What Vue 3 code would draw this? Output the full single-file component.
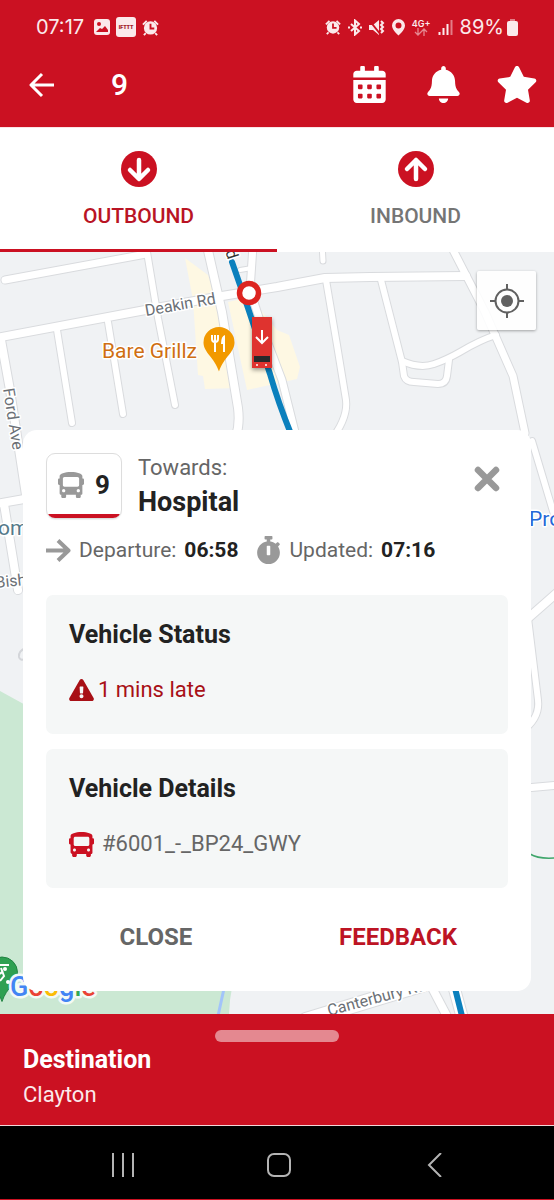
<script setup>
import { ref } from 'vue'

const direction = ref('outbound')

const tabs = [
  { id: 'outbound', label: 'OUTBOUND', arrow: 'M18 9v18M9 19l9 9 9-9' },
  { id: 'inbound', label: 'INBOUND', arrow: 'M18 28V9M9 18l9-9 9 9' },
]

const busPath =
  'M488 128h-8V80c0-44.8-99.2-80-224-80S32 35.2 32 80v48h-8c-13.25 0-24 10.74-24 24v80c0 13.25 10.75 24 24 24h8v160c0 17.67 14.33 32 32 32v32c0 17.67 14.33 32 32 32h32c17.67 0 32-14.33 32-32v-32h192v32c0 17.67 14.33 32 32 32h32c17.67 0 32-14.33 32-32v-32h6.4c16 0 25.6-12.8 25.6-25.6V256h8c13.25 0 24-10.75 24-24v-80c0-13.26-10.75-24-24-24zM112 400c-17.67 0-32-14.33-32-32s14.33-32 32-32 32 14.33 32 32-14.33 32-32 32zm16-112c-17.67 0-32-14.33-32-32V128c0-17.67 14.33-32 32-32h256c17.67 0 32 14.33 32 32v128c0 17.67-14.33 32-32 32H128zm272 112c-17.67 0-32-14.33-32-32s14.33-32 32-32 32 14.33 32 32-14.33 32-32 32z'

const alarmPath = 'M1 6l4-4M17 6l-4-4M4 15l-2 2M14 15l2 2'

const roads = [
  { d: 'M5 280L146 254', w: 7 },
  { d: 'M146 246L158 318L175 405', w: 6 },
  { d: 'M-4 338L140 311L222 296L277 287L325 278L370 277L466 276', w: 8 },
  { d: 'M57 330L72 423', w: 6 },
  { d: 'M108 322L123 414', w: 6 },
  { d: 'M1 340L10 390L26 495', w: 8 },
  { d: 'M207 246L222 312L238 408Q240 424 236 436', w: 8 },
  { d: 'M253 246L250 290L263 330L282 380L296 436', w: 7 },
  { d: 'M240 270L252 268', w: 4 },
  { d: 'M322 244L323 261', w: 5 },
  { d: 'M326 280L337 345L346 400Q348 416 334 436', w: 6 },
  { d: 'M381 280L402 362L404 376Q406 382 414 382L438 384Q446 384 447 376L449 360', w: 6 },
  { d: 'M402 361Q420 369 434 364Q446 360 460 352Q480 340 496 335', w: 6 },
  { d: 'M451 246L485 312L495 335L513 376L525 433', w: 7 },
  { d: 'M532 441L558 528', w: 6 },
  { d: 'M526 620L560 590', w: 8 },
  { d: 'M528 618L538 700Q540 716 526 728', w: 6 },
  { d: 'M526 788L560 785', w: 7 },
  { d: 'M-4 504L30 498', w: 8 },
  { d: 'M4 504L18 590', w: 8 },
  { d: 'M306 1020L424 984', w: 14 },
  { d: 'M428 980L450 1022', w: 8 },
  { d: 'M452 980L463 1020', w: 11 },
]
</script>

<template>
  <div class="screen">
    <header class="top">
      <div class="status">
        <div class="status-left">
          <span class="clock">07:17</span>
          <svg width="16" height="16" viewBox="0 0 16 16">
            <rect width="16" height="16" rx="3" fill="currentColor" />
            <circle cx="5" cy="5" r="2" class="cut" />
            <path d="M2 13l4-4 2 1 3-3 3 4v2z" class="cut" />
          </svg>
          <span class="ifttt">IFTTT</span>
          <svg width="17" height="17" viewBox="0 0 18 18">
            <circle cx="9" cy="9.500" r="7" fill="currentColor" />
            <path :d="alarmPath" class="line-2" />
            <path d="M9 5v5h4" class="cut-line" />
          </svg>
        </div>
        <div class="status-right">
          <svg width="16" height="16" viewBox="0 0 18 18">
            <circle cx="9" cy="9.500" r="7" fill="currentColor" />
            <path :d="alarmPath" class="line-2" />
            <path d="M9 5v5h4" class="cut-line" />
          </svg>
          <svg width="14" height="17" viewBox="0 0 14 17">
            <path d="M3 5l8 7-4 3.500V1.500L11 5l-8 7M0 8.500h2M12 8.500h2" class="line-2" />
          </svg>
          <svg width="16" height="17" viewBox="0 0 16 17">
            <path d="M0 6h4l6-5v15l-6-5H0z" fill="currentColor" />
            <path d="M0 1l12 15" class="cut-line" />
            <path d="M12 2l2 2-2 2 2 2-2 2 2 2-2 2" class="line-2" />
          </svg>
          <svg width="13" height="17" viewBox="0 0 13 17">
            <path fill-rule="evenodd" fill="currentColor" d="M6.500 0A6.500 6.500 0 0 0 0 6.500C0 11 6.500 16.500 6.500 16.500S13 11 13 6.500A6.500 6.500 0 0 0 6.500 0zm0 3.500a3 3 0 1 1 0 6 3 3 0 0 1 0-6z" />
          </svg>
          <span class="network">
            <span>4G+</span>
            <svg width="14" height="8" viewBox="0 0 14 8">
              <path d="M4 0v7M1 4l3 3 3-3M10 8V1M7 4l3-3 3 3" fill="none" stroke="currentColor" stroke-width="1.300" opacity=".55" />
            </svg>
          </span>
          <svg width="15" height="16" viewBox="0 0 15 16">
            <path d="M1.500 13v3M5.500 9v7M9.500 5v11" fill="none" stroke="currentColor" stroke-width="2" />
            <path d="M13.500 1v15" fill="none" stroke="currentColor" stroke-width="2" opacity=".5" />
          </svg>
          <span class="battery">
            <span>89%</span>
            <svg width="11" height="17" viewBox="0 0 11 17">
              <path d="M3 0h5v2H3z" fill="currentColor" opacity=".5" />
              <rect y="2" width="11" height="15" rx="2" fill="currentColor" />
            </svg>
          </span>
        </div>
      </div>
      <div class="app-bar">
        <button class="back" aria-label="Back">
          <svg width="26" height="26" viewBox="0 0 26 26">
            <path d="M13 2L2 13l11 11M2 13h23" fill="none" stroke="currentColor" stroke-width="3" stroke-linejoin="round" />
          </svg>
        </button>
        <h1>9</h1>
        <div class="actions">
          <button aria-label="Timetable">
            <svg width="33" height="37" viewBox="0 0 448 512">
              <path fill="currentColor" d="M0 464c0 26.500 21.500 48 48 48h352c26.500 0 48-21.500 48-48V192H0v272zm320-196c0-6.600 5.400-12 12-12h40c6.600 0 12 5.400 12 12v40c0 6.600-5.400 12-12 12h-40c-6.600 0-12-5.400-12-12v-40zm0 128c0-6.600 5.400-12 12-12h40c6.600 0 12 5.400 12 12v40c0 6.600-5.400 12-12 12h-40c-6.600 0-12-5.400-12-12v-40zM192 268c0-6.600 5.400-12 12-12h40c6.600 0 12 5.400 12 12v40c0 6.600-5.400 12-12 12h-40c-6.600 0-12-5.400-12-12v-40zm0 128c0-6.600 5.400-12 12-12h40c6.600 0 12 5.400 12 12v40c0 6.600-5.400 12-12 12h-40c-6.600 0-12-5.400-12-12v-40zM64 268c0-6.600 5.400-12 12-12h40c6.600 0 12 5.400 12 12v40c0 6.600-5.400 12-12 12H76c-6.600 0-12-5.400-12-12v-40zm0 128c0-6.600 5.400-12 12-12h40c6.600 0 12 5.400 12 12v40c0 6.600-5.400 12-12 12H76c-6.600 0-12-5.400-12-12v-40zM400 64h-48V16c0-8.800-7.200-16-16-16h-32c-8.800 0-16 7.200-16 16v48H160V16c0-8.800-7.200-16-16-16h-32c-8.800 0-16 7.200-16 16v48H48C21.500 64 0 85.500 0 112v48h448v-48c0-26.500-21.500-48-48-48z" />
            </svg>
          </button>
          <button aria-label="Alerts">
            <svg width="33" height="37" viewBox="0 0 448 512">
              <path fill="currentColor" d="M224 512c35.320 0 63.970-28.650 63.970-64H160.030c0 35.350 28.650 64 63.970 64zm215.390-149.710c-19.320-20.760-55.470-51.990-55.470-154.290 0-77.700-54.480-139.900-127.940-155.160V32c0-17.670-14.320-32-31.980-32s-31.980 14.330-31.980 32v20.840C118.560 68.100 64.080 130.300 64.080 208c0 102.300-36.150 133.530-55.470 154.290-6 6.450-8.660 14.160-8.610 21.710.11 16.400 12.980 32 32.100 32h383.800c19.120 0 32-15.600 32.100-32 .05-7.550-2.610-15.270-8.610-21.710z" />
            </svg>
          </button>
          <button aria-label="Favourite">
            <svg width="42" height="37" viewBox="0 0 576 512">
              <path fill="currentColor" d="M259.300 17.800L194 150.200 47.900 171.500c-26.200 3.800-36.700 36.100-17.700 54.600l105.700 103-25 145.500c-4.500 26.300 23.200 46 46.400 33.700L288 439.600l130.700 68.700c23.200 12.200 50.900-7.400 46.400-33.700l-25-145.500 105.700-103c19-18.500 8.500-50.800-17.700-54.600L382 150.200 316.700 17.800c-11.700-23.600-45.600-23.900-57.400 0z" />
            </svg>
          </button>
        </div>
      </div>
    </header>

    <nav class="tabs" aria-label="Direction">
      <button
        v-for="tab in tabs"
        :key="tab.id"
        class="tab"
        :class="{ active: direction === tab.id }"
        @click="direction = tab.id"
      >
        <svg width="36" height="36" viewBox="0 0 36 36">
          <circle cx="18" cy="18" r="18" fill="#cb1122" />
          <path :d="tab.arrow" fill="none" stroke="#fff" stroke-width="4.500" stroke-linecap="round" stroke-linejoin="round" />
        </svg>
        <span>{{ tab.label }}</span>
      </button>
    </nav>

    <main class="map">
      <svg class="map-canvas" viewBox="0 252 554 762" preserveAspectRatio="xMidYMin slice" aria-label="Map">
        <rect y="252" width="554" height="762" fill="#f0f2f4" />
        <path d="M185 258L208 275L222 312L237 388L205 389L203 376L198 375L193 300Z" fill="#fef8e3" />
        <path d="M228 302L250 297L277 330L289 335L300 367L297 379L247 390Z" fill="#fef8e3" />
        <path d="M0 691L60 724V960H240Q230 985 229 1014H0Z" fill="#cbe8d3" />
        <path d="M225 984L218 1016" fill="none" stroke="#a2c4fa" stroke-width="3" />
        <path d="M26 648q-8 3-7 9 1 4 6 2" fill="none" stroke="#d4d6da" stroke-width="2" />
        <g fill="none" stroke-linecap="round" stroke-linejoin="round">
          <path v-for="(r, i) in roads" :key="'c' + i" :d="r.d" stroke="#d9dbde" :stroke-width="r.w + 2" />
          <path v-for="(r, i) in roads" :key="'r' + i" :d="r.d" stroke="#fff" :stroke-width="r.w" />
          <path d="M530 854q8 5 24 4" stroke="#3fa66b" stroke-width="1.500" />
          <path d="M232 262L248 308L262 350L270 374Q278 402 291 434" stroke="#0b80bd" stroke-width="6" />
          <path d="M453 980L463 1020" stroke="#0b80bd" stroke-width="6" />
        </g>
        <g class="street">
          <text transform="translate(146 316) rotate(-10)">Deakin Rd</text>
          <text transform="translate(3 389) rotate(81)">Ford Ave</text>
          <text transform="translate(228 260) rotate(72)" text-anchor="end" fill="#333">d</text>
          <text transform="translate(-4 588) rotate(-6)">Bish</text>
          <text transform="translate(329 1016) rotate(-15)">Canterbury Rd</text>
        </g>
        <text class="place" x="102" y="358" fill="#cf6f12">Bare Grillz</text>
        <text class="place" x="-2" y="535" fill="#54798a">om</text>
        <text class="place" x="529" y="526" fill="#2468d8">Pro</text>
        <path d="M219 327a15.500 15.500 0 0 0-15.500 15.500c0 10 11 15 15.500 29 4.500-14 15.500-19 15.500-29A15.500 15.500 0 0 0 219 327z" fill="#f29900" />
        <path d="M212 335v4q0 3 3 3t3-3v-4M215 335v17" fill="none" stroke="#fff" stroke-width="2" />
        <path d="M225 335q-4 1-4 9h2v8h2z" fill="#fff" />
        <circle cx="249" cy="293" r="9.500" fill="#fff" stroke="#dc2420" stroke-width="5.500" />
        <g class="vehicle">
          <rect x="252" y="317" width="20" height="51" fill="#df332f" />
          <path d="M262 330v12M256 337l6 6 6-6" fill="none" stroke="#fff" stroke-width="2" />
          <rect x="254" y="356" width="16" height="6" fill="#29292b" />
          <circle cx="257" cy="365" r="1" fill="#fff" />
          <circle cx="266" cy="365" r="1" fill="#fff" />
        </g>
        <path d="M2 957a15.500 15.500 0 0 0-15.500 15.500c0 10 11 15 15.500 29 4.500-14 15.500-19 15.500-29A15.500 15.500 0 0 0 2 957z" fill="#2fa052" stroke="#218342" />
        <path d="M0 965h9M1 968l3 8-4 5M3 971l-3 3" fill="none" stroke="#fff" stroke-width="2" />
        <circle cx="5" cy="969" r="2" fill="#fff" />
        <circle cx="8" cy="982" r="2" fill="#fff" />
        <text class="google" x="10" y="996"><tspan fill="#4285f4">G</tspan><tspan fill="#ea4335">o</tspan><tspan fill="#fbbc05">o</tspan><tspan fill="#4285f4">g</tspan><tspan fill="#34a853">l</tspan><tspan fill="#ea4335">e</tspan></text>
      </svg>

      <button class="locate" aria-label="Show my location">
        <svg width="34" height="34" viewBox="0 0 34 34">
          <circle cx="17" cy="17" r="11.500" fill="none" stroke="#616161" stroke-width="2" />
          <circle cx="17" cy="17" r="6" fill="#616161" />
          <path d="M17 0v5M17 29v5M0 17h5M29 17h5" stroke="#616161" stroke-width="2" />
        </svg>
      </button>

      <section class="card">
        <div class="card-head">
          <div class="badge">
            <svg width="26" height="26" viewBox="0 0 512 512"><path :d="busPath" fill="#999" /></svg>
            <strong>9</strong>
          </div>
          <div class="towards">
            <span>Towards:</span>
            <h2>Hospital</h2>
          </div>
          <button class="dismiss" aria-label="Dismiss">
            <svg width="28" height="28" viewBox="0 0 28 28">
              <path d="M5 5l18 18M23 5L5 23" fill="none" stroke="currentColor" stroke-width="6.500" stroke-linecap="round" />
            </svg>
          </button>
        </div>

        <div class="times">
          <svg width="25" height="25" viewBox="0 0 25 25">
            <path d="M0 12.500h22M12 2.500l10.500 10L12 22.500" fill="none" stroke="#999" stroke-width="4" stroke-linejoin="round" />
          </svg>
          <span>Departure:</span>
          <strong>06:58</strong>
          <svg class="watch" width="25" height="28" viewBox="0 0 448 512">
            <path fill="#999" d="M432 304c0 114.900-93.100 208-208 208S16 418.900 16 304c0-104 76.300-190.200 176-205.500V64h-28c-6.600 0-12-5.400-12-12V12c0-6.600 5.400-12 12-12h120c6.600 0 12 5.400 12 12v40c0 6.600-5.400 12-12 12h-28v34.500c37.500 5.800 71.700 21.600 99.700 44.600l27.500-27.500c4.700-4.700 12.300-4.700 17 0l28.300 28.300c4.700 4.700 4.700 12.300 0 17l-29.400 29.400-.6.6C419.700 223.300 432 262.200 432 304zm-176 36V188.500c0-6.600-5.400-12-12-12h-40c-6.600 0-12 5.400-12 12V340c0 6.600 5.400 12 12 12h40c6.600 0 12-5.400 12-12z" />
          </svg>
          <span>Updated:</span>
          <strong>07:16</strong>
        </div>

        <div class="panel">
          <h3>Vehicle Status</h3>
          <p class="late">
            <svg width="25" height="22" viewBox="0 0 576 512">
              <path fill="currentColor" d="M569.517 440.013C587.975 472.007 564.806 512 527.940 512H48.054c-36.937 0-59.999-40.055-41.577-71.987L246.423 23.985c18.467-32.009 64.720-31.951 83.154 0l239.940 416.028zM288 354c-25.405 0-46 20.595-46 46s20.595 46 46 46 46-20.595 46-46-20.595-46-46-46zm-43.673-165.346l7.418 136c.347 6.364 5.609 11.346 11.982 11.346h48.546c6.373 0 11.635-4.982 11.982-11.346l7.418-136c.375-6.874-5.098-12.654-11.982-12.654h-63.383c-6.884 0-12.356 5.780-11.981 12.654z" />
            </svg>
            <span>1 mins late</span>
          </p>
        </div>

        <div class="panel">
          <h3>Vehicle Details</h3>
          <p class="fleet">
            <svg width="25" height="25" viewBox="0 0 512 512"><path :d="busPath" fill="#cb1122" /></svg>
            <span>#6001_-_BP24_GWY</span>
          </p>
        </div>

        <div class="card-actions">
          <button class="text-btn">CLOSE</button>
          <button class="text-btn primary">FEEDBACK</button>
        </div>
      </section>
    </main>

    <section class="sheet">
      <div class="handle"></div>
      <h3>Destination</h3>
      <p>Clayton</p>
    </section>

    <nav class="system" aria-label="System">
      <button aria-label="Recent apps">
        <svg width="24" height="24" viewBox="0 0 24 24"><path d="M2 0v24M12 0v24M22 0v24" stroke="#b4b4b4" stroke-width="2" /></svg>
      </button>
      <button aria-label="Home">
        <svg width="24" height="24" viewBox="0 0 24 24"><rect x="1" y="1" width="22" height="22" rx="6" fill="none" stroke="#b4b4b4" stroke-width="2" /></svg>
      </button>
      <button aria-label="Go back">
        <svg width="24" height="24" viewBox="0 0 24 24"><path d="M18 0L6 12l12 12" fill="none" stroke="#b4b4b4" stroke-width="2" /></svg>
      </button>
    </nav>
  </div>
</template>

<style>
body {
  margin: 0;
}
</style>

<style scoped>
.screen {
  display: flex;
  flex-direction: column;
  min-height: 100vh;
  box-sizing: border-box;
  border-bottom: 1px solid #cb1122;
  background: #fff;
  font-family: Roboto, "Liberation Sans", sans-serif;
  font-size: 22px;
  color: #666;
}
svg {
  display: block;
  flex: none;
}
h1, h2, h3, p {
  margin: 0;
}
button {
  display: flex;
  align-items: center;
  justify-content: center;
  margin: 0;
  padding: 0;
  border: 0;
  background: none;
  font: inherit;
  color: inherit;
  cursor: pointer;
}
.top {
  background: #cb1122;
  color: #fff;
}
.status {
  display: flex;
  justify-content: space-between;
  height: 54px;
  padding: 0 36px;
  color: #fbe9eb;
  font-family: Inter, Roboto, sans-serif;
  font-size: 20px;
}
.status-left, .status-right {
  display: flex;
  align-items: center;
}
.status-left {
  gap: 6px;
}
.clock {
  margin-right: 4px;
}
.status-right {
  gap: 7px;
}
.ifttt {
  width: 20px;
  border-radius: 3px;
  background: #fbe9eb;
  color: #a3202c;
  font-size: 5px;
  font-weight: 900;
  line-height: 20px;
  text-align: center;
}
.cut {
  fill: #cb1122;
}
.cut-line {
  fill: none;
  stroke: #cb1122;
  stroke-width: 2;
}
.line-2 {
  fill: none;
  stroke: currentColor;
  stroke-width: 2;
}
.network {
  display: flex;
  flex-direction: column;
  align-items: center;
  font-size: 9px;
  font-weight: 600;
  line-height: 9px;
}
.battery {
  display: flex;
  align-items: center;
  gap: 3px;
}
.app-bar {
  display: flex;
  align-items: center;
  height: 73px;
  padding: 0 16px 12px 29px;
  box-sizing: border-box;
}
.app-bar h1 {
  flex: 1;
  margin-left: 56px;
  font-size: 30px;
  font-weight: 500;
  line-height: 36px;
}
.actions {
  display: grid;
  grid-template-columns: repeat(3, 42px);
  gap: 32px;
}
.tabs {
  display: grid;
  grid-template-columns: 1fr 1fr;
  border-top: 1px solid #fbe3e5;
}
.tab {
  flex-direction: column;
  gap: 16px;
  padding: 23px 0 20px;
  border-bottom: 3px solid transparent;
  color: #757575;
  font-size: 21px;
  font-weight: 500;
  line-height: 26px;
}
.tab.active {
  border-color: #cb1122;
  color: #b91424;
}
.map {
  position: relative;
  flex: 1;
  padding: 178px 23px 23px;
}
.map-canvas {
  position: absolute;
  inset: 0;
  width: 100%;
  height: 100%;
}
.street {
  fill: #6b7076;
  font-size: 16px;
}
.street text, .place {
  stroke: #fff;
  stroke-width: 3px;
  stroke-linejoin: round;
  paint-order: stroke;
}
.place {
  font-size: 21px;
}
.google {
  font-size: 27px;
  font-weight: 500;
  stroke: #f3faf5;
  stroke-width: 5px;
  stroke-linejoin: round;
  paint-order: stroke;
}
.vehicle {
  filter: drop-shadow(0 2px 2px #0006);
}
.locate {
  position: absolute;
  top: 19px;
  right: 18px;
  width: 59px;
  height: 59px;
  border-radius: 2px;
  background: #ffffffe0;
  box-shadow: 0 1px 3px #0005;
}
.card {
  position: relative;
  padding: 23px 23px 34px;
  border-radius: 14px;
  background: #fff;
}
.card-head {
  display: flex;
  align-items: flex-start;
  gap: 16px;
}
.badge {
  position: relative;
  display: flex;
  align-items: center;
  justify-content: center;
  gap: 11px;
  box-sizing: border-box;
  width: 76px;
  height: 66px;
  padding-bottom: 3px;
  overflow: hidden;
  border: 1px solid #ddd;
  border-radius: 9px;
  color: #222;
  font-size: 26px;
  box-shadow: 0 1px 1px #0001;
}
.badge::after {
  content: "";
  position: absolute;
  right: 0;
  bottom: 0;
  left: 0;
  height: 4px;
  background: #cb1122;
}
.towards {
  flex: 1;
  line-height: 30px;
}
.towards h2 {
  color: #222;
  font-size: 27px;
  font-weight: 700;
  line-height: 38px;
}
.dismiss {
  width: 42px;
  height: 52px;
  color: #999;
}
.times {
  display: flex;
  align-items: center;
  gap: 8px;
  margin-top: 15px;
  font-size: 21px;
  line-height: 28px;
}
.times strong {
  color: #222;
}
.watch {
  margin-left: 10px;
}
.panel {
  margin-top: 15px;
  padding: 23px;
  border-radius: 7px;
  background: #f5f7f7;
}
.times + .panel {
  margin-top: 31px;
}
.panel h3 {
  color: #222;
  font-size: 25px;
  font-weight: 700;
  line-height: 34px;
}
.panel p {
  display: flex;
  align-items: center;
  margin-top: 23px;
  line-height: 30px;
  padding-bottom: 6px;
}
.late {
  gap: 4px;
  color: #a81016;
}
.fleet {
  gap: 8px;
}
.card-actions {
  display: grid;
  grid-template-columns: 1fr 1fr;
  gap: 22px;
  margin-top: 29px;
}
.text-btn {
  font-size: 24px;
  font-weight: 700;
  line-height: 40px;
}
.text-btn.primary {
  color: #bd1424;
}
.sheet {
  padding: 16px 23px;
  background: #cb1122;
  color: #fbe9eb;
}
.sheet h3 {
  margin-top: 2px;
  color: #fff;
  font-size: 25px;
  font-weight: 700;
  line-height: 32px;
}
.sheet p {
  margin-top: 5px;
  font-size: 22px;
  line-height: 28px;
}
.handle {
  width: 124px;
  height: 12px;
  margin: 0 auto;
  border-radius: 6px;
  background: #e48890;
}
.system {
  display: flex;
  justify-content: center;
  gap: 132px;
  padding: 27px 0 22px 4px;
  border-top: 1px solid #f3d5d8;
  background: #000;
}
</style>
